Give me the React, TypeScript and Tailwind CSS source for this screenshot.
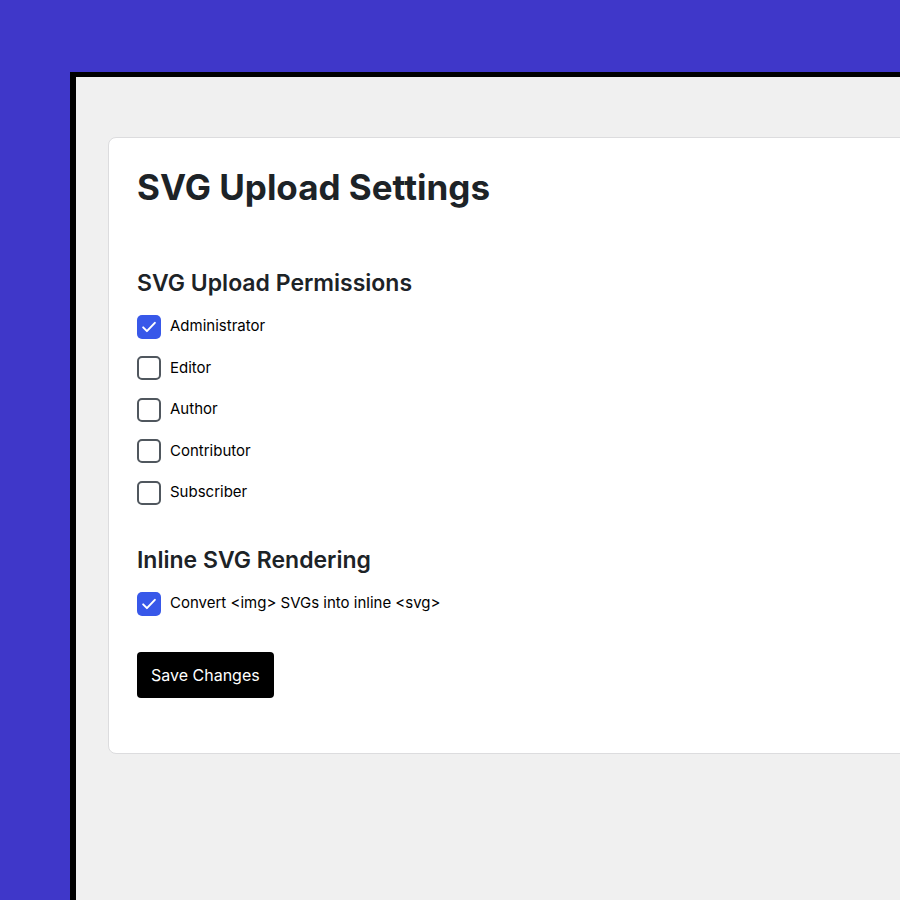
import React, { useState } from "react";

const roles = ["Administrator", "Editor", "Author", "Contributor", "Subscriber"];

const Box = ({ checked, onClick }: { checked: boolean; onClick: () => void }) => (
  <button
    type="button"
    onClick={onClick}
    className={
      checked
        ? "flex h-6 w-6 shrink-0 items-center justify-center rounded-[5px] bg-[#3858e9]"
        : "flex h-6 w-6 shrink-0 items-center justify-center rounded-[5px] border-2 border-[#50575e] bg-white"
    }
  >
    {checked && (
      <svg width="20" height="20" viewBox="0 0 24 24" fill="none">
        <path d="M5 12.5l4.5 4.5L19 7" stroke="white" strokeWidth="2.4" strokeLinecap="round" strokeLinejoin="round" />
      </svg>
    )}
  </button>
);

const App = () => {
  const [perms, setPerms] = useState<Record<string, boolean>>({ Administrator: true });
  const [inline, setInline] = useState(true);

  return (
    <div className="h-[900px] overflow-hidden bg-[#3f37c9] pl-[70px] pt-[72px] font-['Inter',sans-serif] text-[#1d2327]">
      {/* app window */}
      <div className="h-[900px] w-[900px] border-l-[6px] border-t-[5px] border-black bg-[#f0f0f0] pl-[32px] pt-[60px]">
        <div className="w-[900px] rounded-lg border border-[#dcdcde] bg-white pb-[55px] pl-[28px] pt-[29px]">
          <h1 className="text-[35px] font-bold leading-[40px]">SVG Upload Settings</h1>

          <h2 className="mt-[60px] text-[23px] font-semibold leading-[32px]">SVG Upload Permissions</h2>
          <div className="mt-[15px] flex flex-col gap-[17.5px]">
            {roles.map((r) => (
              <label key={r} className="flex h-6 items-center gap-[9px] pt-px text-[15px] text-black">
                <Box checked={!!perms[r]} onClick={() => setPerms({ ...perms, [r]: !perms[r] })} />
                {r}
              </label>
            ))}
          </div>

          <h2 className="mt-[40px] text-[23px] font-semibold leading-[32px]">Inline SVG Rendering</h2>
          <label className="mt-[15px] flex h-6 items-center gap-[9px] pt-px text-[15px] text-black">
            <Box checked={inline} onClick={() => setInline(!inline)} />
            {"Convert <img> SVGs into inline <svg>"}
          </label>

          <button className="mt-[37px] h-[46px] rounded-[4px] bg-black px-[14px] text-[16px] text-white">
            Save Changes
          </button>
        </div>
      </div>
    </div>
  );
};

export default App;
